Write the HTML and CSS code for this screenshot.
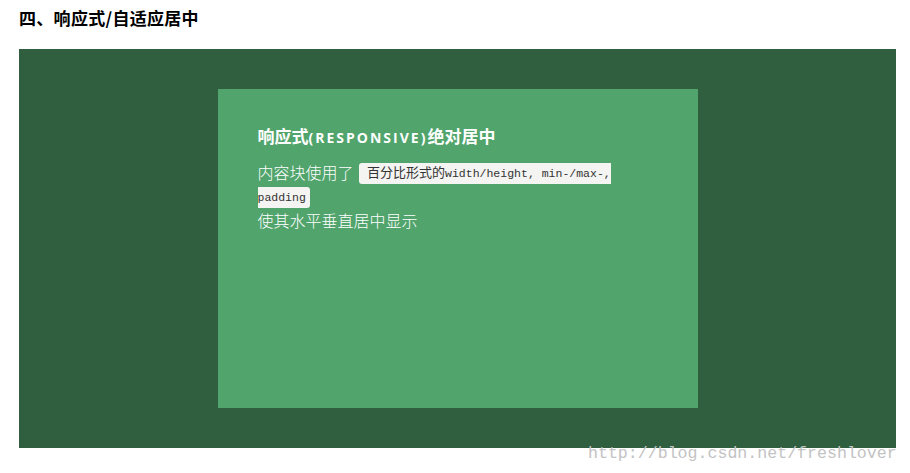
FILE: index.html
```html
<!DOCTYPE html>
<html lang="zh">
<head>
<meta charset="utf-8">
<link rel="stylesheet" href="styles.css">
</head>
<body>
<h3 class="section-title">四、响应式/自适应居中</h3>
<div class="stage">
  <div class="card">
    <h4 class="card-title">响应式<span class="latin">(RESPONSIVE)</span>绝对居中</h4>
    <p class="card-text">内容块使用了 <code class="code"><span class="code-cjk">百分比形式的</span>width/height, min-/max-, padding</code><br>使其水平垂直居中显示</p>
  </div>
</div>
<div class="watermark">http://blog.csdn.net/freshlover</div>
</body>
</html>
```
FILE: styles.css
```css
html, body {
  margin: 0;
  padding: 0;
  background: #ffffff;
}
body {
  position: relative;
  width: 910px;
  height: 473px;
  overflow: hidden;
  font-family: "Noto Sans CJK SC", "Open Sans", sans-serif;
}
.section-title {
  margin: 0;
  padding: 9px 0 0 19px;
  height: 40px;
  box-sizing: border-box;
  font-family: "Noto Sans CJK SC", sans-serif;
  font-size: 17px;
  line-height: 18px;
  letter-spacing: 0.3px;
  font-weight: 700;
  color: #000;
}
.stage {
  margin-left: 19px;
  width: 877px;
  height: 399px;
  margin-top: 9px;
  background: #2f5f3f;
  display: flex;
  align-items: center;
  justify-content: center;
}
.card {
  width: 480px;
  height: 319px;
  box-sizing: border-box;
  padding: 37px 40px;
  background: #50a46c;
  color: #ffffff;
}
.card-title {
  margin: 0;
  font-size: 17px;
  line-height: 20px;
  font-weight: 700;
  font-family: "Noto Sans CJK SC", sans-serif;
}
.latin {
  font-family: "Open Sans", sans-serif;
  font-size: 14px;
  letter-spacing: 2px;
}
.card-text {
  margin: 12px 0 0;
  font-size: 16px;
  line-height: 24px;
  font-family: "Noto Sans CJK SC", sans-serif;
  font-weight: 300;
}
.code {
  font-family: "Liberation Mono", "Noto Sans CJK SC", monospace;
  font-size: 11.5px;
  line-height: 14px;
  vertical-align: 2px;
  background: #f4f4f2;
  color: #333333;
  padding: 4px 4px 4px 8px;
  border-radius: 3px;
  margin-left: 2px;
}
.code-cjk {
  font-family: "Noto Sans CJK SC", sans-serif;
  font-size: 13px;
  line-height: 14px;
  font-weight: 400;
}
.watermark {
  position: absolute;
  left: 588px;
  top: 444px;
  font-family: "Liberation Mono", monospace;
  font-size: 16.6px;
  line-height: 20px;
  color: #c3c3c3;
  white-space: nowrap;
}
```
